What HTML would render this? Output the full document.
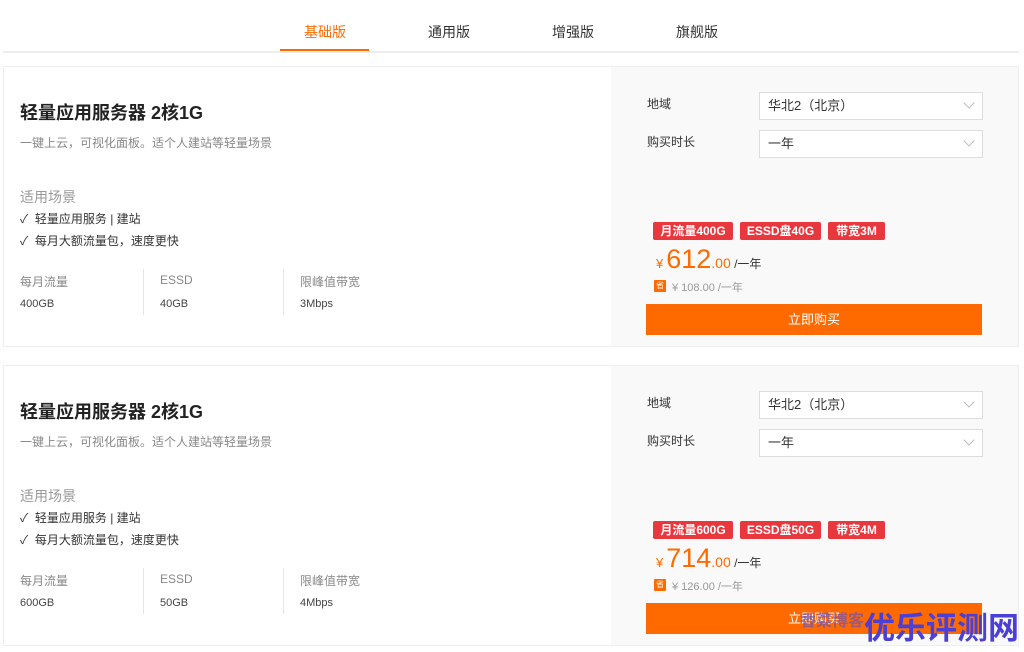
<!DOCTYPE html><html><head><meta charset="utf-8"><style>
*{margin:0;padding:0;box-sizing:border-box}
body{width:1024px;height:652px;background:#fff;font-family:"Liberation Sans","Noto Sans CJK SC",sans-serif;position:relative;overflow:hidden;color:#333}
.a{position:absolute;white-space:nowrap}
.tabline{left:3px;top:51px;width:1016px;height:2px;background:#eee}
.tab{top:22px;font-size:14px;color:#333}
.card{left:3px;width:1016px;height:281px;border:1px solid #eee;background:#fff}
.rp{left:607px;top:0;width:407px;height:279px;background:#f9f9f9}
.t{font-size:18px;font-weight:bold;color:#222}
.s{font-size:12px;color:#888}
.g{font-size:13px;color:#333}
.sel{width:224px;height:28px;border:1px solid #ddd;background:#fff;font-size:13px;padding:0 8px;line-height:26px;color:#333}
.sel:after{content:"";position:absolute;right:9px;top:6px;width:7px;height:7px;border-right:1px solid #bbb;border-bottom:1px solid #bbb;transform:rotate(45deg)}
.tag{height:18px;background:#e8383d;color:#fff;font-size:12px;font-weight:bold;line-height:18px;text-align:center;border-radius:2px}
.btn{left:643px;width:336px;height:31px;background:#ff6a00;color:#fff;font-size:13px;line-height:31px;text-align:center}
.div{width:1px;height:46px;background:#e5e5e5}
</style></head><body>
<div class="a tabline"></div>
<div class="a" style="left:280px;top:49px;width:89px;height:2px;background:#ff6a00"></div>
<div class="a tab" style="left:304px;color:#ff6a00">基础版</div>
<div class="a tab" style="left:428px">通用版</div>
<div class="a tab" style="left:552px">增强版</div>
<div class="a tab" style="left:676px">旗舰版</div>

<div class="a card" style="top:66px">
<div class="a rp"></div>
<div class="a t" style="left:16px;top:32px">轻量应用服务器 2核1G</div>
<div class="a s" style="left:16px;top:67px">一键上云，可视化面板。适个人建站等轻量场景</div>
<div class="a" style="left:16px;top:120px;font-size:14px;color:#999">适用场景</div>
<div class="a g" style="left:16px;top:143px;font-size:12px">✓&nbsp; 轻量应用服务 | 建站</div>
<div class="a g" style="left:16px;top:165px;font-size:12px">✓&nbsp; 每月大额流量包，速度更快</div>
<div class="a s" style="left:16px;top:206px">每月流量</div>
<div class="a" style="left:16px;top:231px;font-size:11px;color:#444">400GB</div>
<div class="a div" style="left:139px;top:202px"></div>
<div class="a s" style="left:156px;top:206px">ESSD</div>
<div class="a" style="left:156px;top:231px;font-size:11px;color:#444">40GB</div>
<div class="a div" style="left:279px;top:202px"></div>
<div class="a s" style="left:296px;top:206px">限峰值带宽</div>
<div class="a" style="left:296px;top:231px;font-size:11px;color:#444">3Mbps</div>
<div class="a g" style="left:643px;top:28px;font-size:12px">地域</div>
<div class="a sel" style="left:755px;top:25px">华北2（北京）</div>
<div class="a g" style="left:643px;top:66px;font-size:12px">购买时长</div>
<div class="a sel" style="left:755px;top:63px">一年</div>
<div class="a tag" style="left:649px;top:155px;width:80px">月流量400G</div>
<div class="a tag" style="left:736px;top:155px;width:81px">ESSD盘40G</div>
<div class="a tag" style="left:824px;top:155px;width:57px">带宽3M</div>
<div class="a" style="left:652px;top:177px;color:#ff6a00"><span style="font-size:13px">¥</span><span style="font-size:27px;margin-left:3px">612</span><span style="font-size:14px">.00</span><span style="font-size:12px;color:#333"> /一年</span></div>
<div class="a" style="left:650px;top:213px;width:12px;height:12px;background:#ff6a00;color:#fff;font-size:8px;text-align:center;line-height:12px;border-radius:1px">省</div>
<div class="a" style="left:668px;top:212px;font-size:11px;color:#999">¥ 108.00 /一年</div>
<div class="a btn" style="top:237px;left:642px">立即购买</div>
</div>

<div class="a card" style="top:365px">
<div class="a rp"></div>
<div class="a t" style="left:16px;top:32px">轻量应用服务器 2核1G</div>
<div class="a s" style="left:16px;top:67px">一键上云，可视化面板。适个人建站等轻量场景</div>
<div class="a" style="left:16px;top:120px;font-size:14px;color:#999">适用场景</div>
<div class="a g" style="left:16px;top:143px;font-size:12px">✓&nbsp; 轻量应用服务 | 建站</div>
<div class="a g" style="left:16px;top:165px;font-size:12px">✓&nbsp; 每月大额流量包，速度更快</div>
<div class="a s" style="left:16px;top:206px">每月流量</div>
<div class="a" style="left:16px;top:231px;font-size:11px;color:#444">600GB</div>
<div class="a div" style="left:139px;top:202px"></div>
<div class="a s" style="left:156px;top:206px">ESSD</div>
<div class="a" style="left:156px;top:231px;font-size:11px;color:#444">50GB</div>
<div class="a div" style="left:279px;top:202px"></div>
<div class="a s" style="left:296px;top:206px">限峰值带宽</div>
<div class="a" style="left:296px;top:231px;font-size:11px;color:#444">4Mbps</div>
<div class="a g" style="left:643px;top:28px;font-size:12px">地域</div>
<div class="a sel" style="left:755px;top:25px">华北2（北京）</div>
<div class="a g" style="left:643px;top:66px;font-size:12px">购买时长</div>
<div class="a sel" style="left:755px;top:63px">一年</div>
<div class="a tag" style="left:649px;top:155px;width:80px">月流量600G</div>
<div class="a tag" style="left:736px;top:155px;width:81px">ESSD盘50G</div>
<div class="a tag" style="left:824px;top:155px;width:57px">带宽4M</div>
<div class="a" style="left:652px;top:177px;color:#ff6a00"><span style="font-size:13px">¥</span><span style="font-size:27px;margin-left:3px">714</span><span style="font-size:14px">.00</span><span style="font-size:12px;color:#333"> /一年</span></div>
<div class="a" style="left:650px;top:213px;width:12px;height:12px;background:#ff6a00;color:#fff;font-size:8px;text-align:center;line-height:12px;border-radius:1px">省</div>
<div class="a" style="left:668px;top:212px;font-size:11px;color:#999">¥ 126.00 /一年</div>
<div class="a btn" style="top:237px;left:642px">立即购买</div>
</div>
<div class="a" style="left:800px;top:607px;font-size:16px;font-weight:bold;color:#5a4fd0;opacity:.6">香菜博客</div>
<div class="a" style="left:864px;top:603px;font-size:31px;font-weight:bold;color:#4b3fd6">优乐评测网</div>
</body></html>
